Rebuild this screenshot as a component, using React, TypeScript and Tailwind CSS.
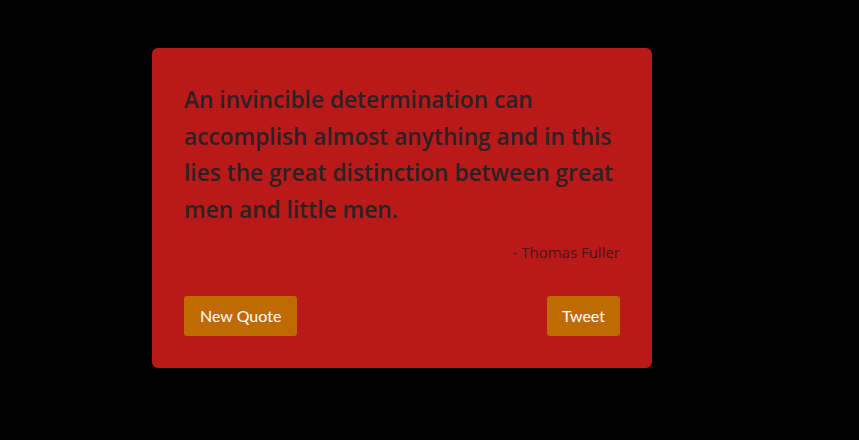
export default function App() {
    return (
        <div className="min-h-[440px] w-full bg-black pt-[48px] pl-[152px]" style={{ fontFamily: "'Open Sans', 'Noto Sans', sans-serif" }}>
            <div className="w-[500px] rounded-[6px] bg-[#b91919] px-8 pt-[34px] pb-8">
                <p className="text-[22.7px] leading-[36.5px] font-semibold text-[#2a2224]">
                    An invincible determination can accomplish almost anything and in this lies the great distinction between great men and little men.
                </p>
                <p className="mt-[12px] text-right text-[15px] leading-6 text-[#4a1616]">- Thomas Fuller</p>
                <div className="mt-8 flex items-center justify-between">
                    <button type="button" className="h-10 rounded-[3px] bg-[#c06a04] px-4 text-[16px] text-white" style={{ fontFamily: "Lato, sans-serif" }}>New Quote</button>
                    <button type="button" className="h-10 rounded-[3px] bg-[#c06a04] px-[15px] text-[16px] text-white" style={{ fontFamily: "Lato, sans-serif" }}>Tweet</button>
                </div>
            </div>
        </div>
    )
}
